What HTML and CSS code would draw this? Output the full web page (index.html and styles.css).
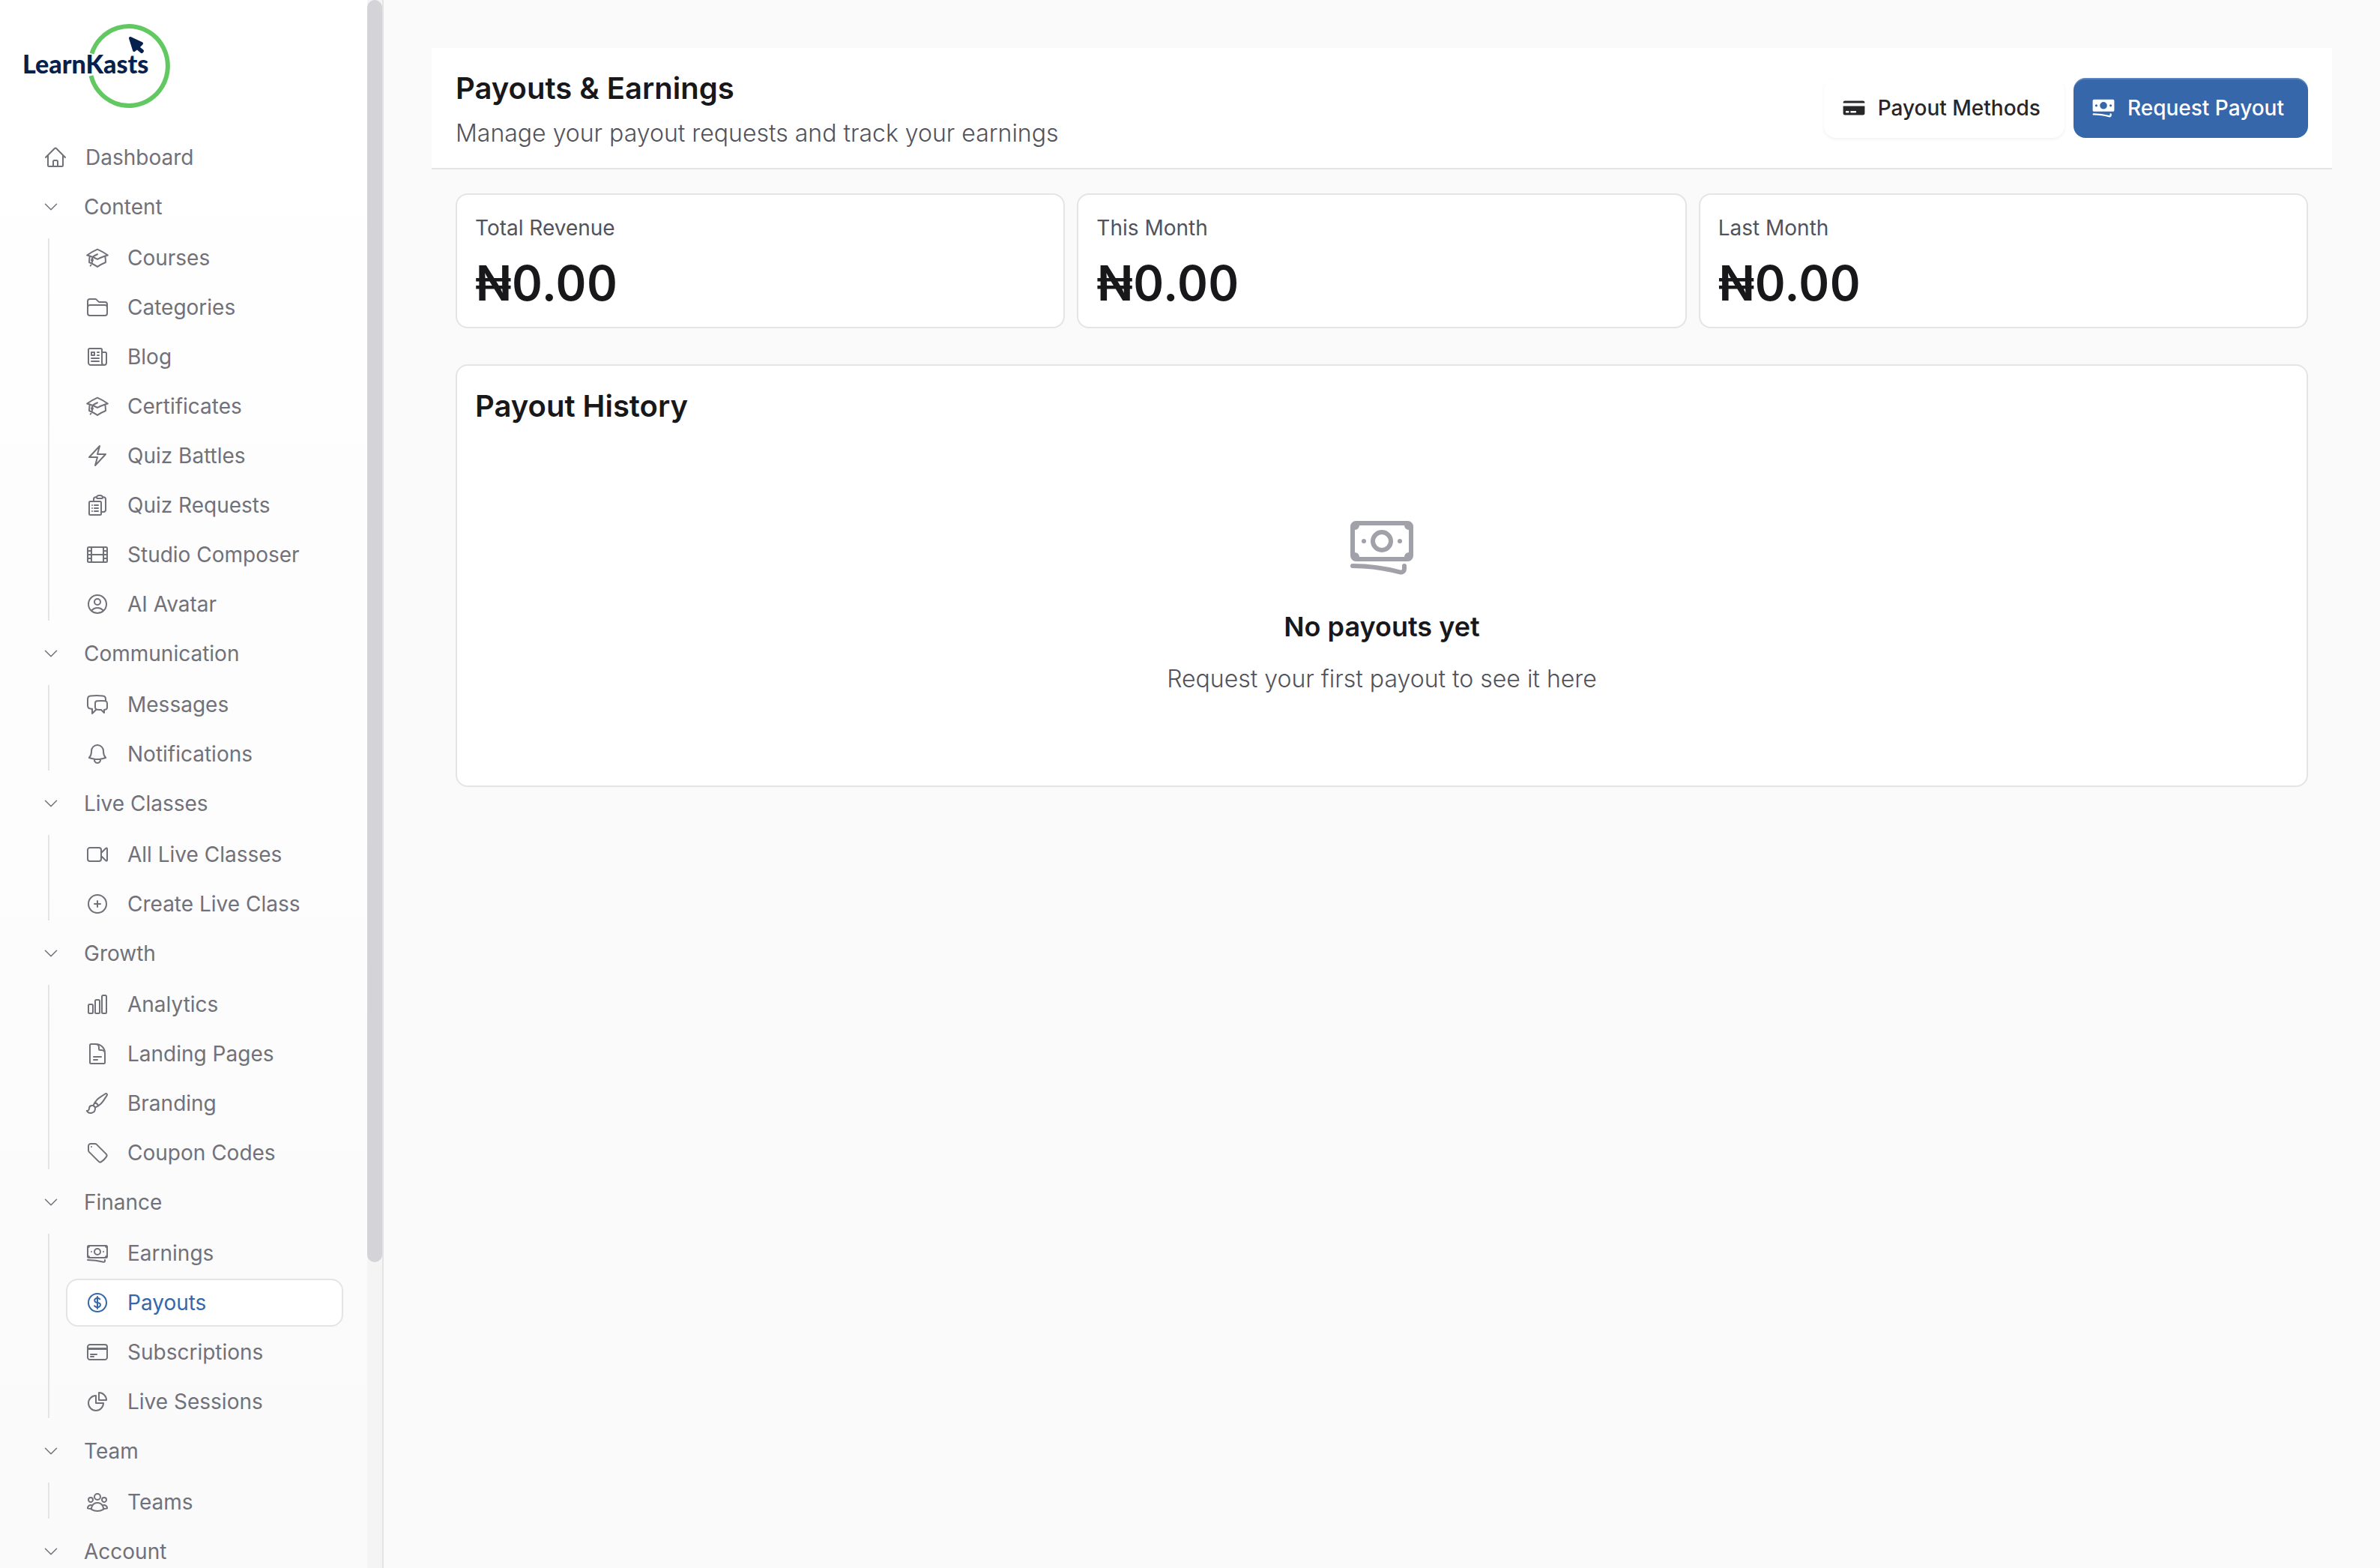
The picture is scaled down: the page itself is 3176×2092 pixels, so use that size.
FILE: index.html
```html
<!DOCTYPE html>
<html lang="en">
<head>
  <meta charset="UTF-8">
  <meta name="viewport" content="width=device-width, initial-scale=1.0">
  <title>Payouts & Earnings - LearnKasts</title>
  <link rel="stylesheet" href="styles.css">
</head>
<body>
  <!-- icon sprite -->
  <svg class="sprite" aria-hidden="true">
    <symbol id="home" viewBox="0 0 24 24"><path d="m2.25 12 8.954-8.955c.44-.439 1.152-.439 1.591 0L21.75 12M4.5 9.75v10.125c0 .621.504 1.125 1.125 1.125H9.75v-4.875c0-.621.504-1.125 1.125-1.125h2.25c.621 0 1.125.504 1.125 1.125V21h4.125c.621 0 1.125-.504 1.125-1.125V9.75M8.25 21h8.25"/></symbol>
    <symbol id="chevron" viewBox="0 0 24 24"><path d="m19.5 8.25-7.5 7.5-7.5-7.5"/></symbol>
    <symbol id="cap" viewBox="0 0 24 24"><path d="M4.26 10.147a60.438 60.438 0 0 0-.491 6.347A48.62 48.62 0 0 1 12 20.904a48.62 48.62 0 0 1 8.232-4.41 60.46 60.46 0 0 0-.491-6.347m-15.482 0a50.636 50.636 0 0 0-2.658-.813A59.906 59.906 0 0 1 12 3.493a59.903 59.903 0 0 1 10.399 5.84c-.896.248-1.783.52-2.658.814m-15.482 0A50.717 50.717 0 0 1 12 13.489a50.702 50.702 0 0 1 7.74-3.342M6.75 15a.75.75 0 1 0 0-1.5.75.75 0 0 0 0 1.5Zm0 0v-3.675A55.378 55.378 0 0 1 12 8.443m-7.007 11.55A5.981 5.981 0 0 0 6.75 15.75v-1.5"/></symbol>
    <symbol id="folder" viewBox="0 0 24 24"><path d="M2.25 12.75V12A2.25 2.25 0 0 1 4.5 9.75h15A2.25 2.25 0 0 1 21.75 12v.75m-8.69-6.44-2.12-2.12a1.5 1.5 0 0 0-1.061-.44H4.5A2.25 2.25 0 0 0 2.25 6v12a2.25 2.25 0 0 0 2.25 2.25h15A2.25 2.25 0 0 0 21.75 18V9a2.25 2.25 0 0 0-2.25-2.25h-5.379a1.5 1.5 0 0 1-1.06-.44Z"/></symbol>
    <symbol id="newspaper" viewBox="0 0 24 24"><path d="M12 7.5h1.5m-1.5 3h1.5m-7.5 3h7.5m-7.5 3h7.5m3-9h3.375c.621 0 1.125.504 1.125 1.125V18a2.25 2.25 0 0 1-2.25 2.25M16.5 7.5V18a2.25 2.25 0 0 0 2.25 2.25M16.5 7.5V4.875c0-.621-.504-1.125-1.125-1.125H4.125C3.504 3.75 3 4.254 3 4.875V18a2.25 2.25 0 0 0 2.25 2.25h13.5M6 7.5h3v3H6v-3Z"/></symbol>
    <symbol id="bolt" viewBox="0 0 24 24"><path d="m3.75 13.5 10.5-11.25L12 10.5h8.25L9.75 21.75 12 13.5H3.75Z"/></symbol>
    <symbol id="clipboard" viewBox="0 0 24 24"><path d="M9 12h3.75M9 15h3.75M9 18h3.75m3 .75H18a2.25 2.25 0 0 0 2.25-2.25V6.108c0-1.135-.845-2.098-1.976-2.192a48.424 48.424 0 0 0-1.123-.08m-5.801 0c-.065.21-.1.433-.1.664 0 .414.336.75.75.75h4.5a.75.75 0 0 0 .75-.75 2.25 2.25 0 0 0-.1-.664m-5.8 0A2.251 2.251 0 0 1 13.5 2.25H15c1.012 0 1.867.668 2.15 1.586m-5.8 0c-.376.023-.75.05-1.124.08C9.095 4.01 8.25 4.973 8.25 6.108V8.25m0 0H4.875c-.621 0-1.125.504-1.125 1.125v11.25c0 .621.504 1.125 1.125 1.125h9.75c.621 0 1.125-.504 1.125-1.125V9.375c0-.621-.504-1.125-1.125-1.125H8.25ZM6.75 12h.008v.008H6.75V12Zm0 3h.008v.008H6.75V15Zm0 3h.008v.008H6.75V18Z"/></symbol>
    <symbol id="film" viewBox="0 0 24 24"><path d="M3.375 19.5h17.25m-17.25 0a1.125 1.125 0 0 1-1.125-1.125M3.375 19.5h1.5C5.496 19.5 6 18.996 6 18.375m-3.75 0V5.625m0 12.75v-1.5c0-.621.504-1.125 1.125-1.125m18.375 2.625V5.625m0 12.75c0 .621-.504 1.125-1.125 1.125m1.125-1.125v-1.5c0-.621-.504-1.125-1.125-1.125m0 3.75h-1.5A1.125 1.125 0 0 1 18 18.375M20.625 4.5H3.375m17.25 0c.621 0 1.125.504 1.125 1.125M20.625 4.5h-1.5C18.504 4.5 18 5.004 18 5.625m3.75 0v1.5c0 .621-.504 1.125-1.125 1.125M3.375 4.5c-.621 0-1.125.504-1.125 1.125M3.375 4.5h1.5C5.496 4.5 6 5.004 6 5.625m-3.75 0v1.5c0 .621.504 1.125 1.125 1.125m0 0h1.5m-1.5 0c-.621 0-1.125.504-1.125 1.125v1.5c0 .621.504 1.125 1.125 1.125m1.5-3.75C5.496 8.25 6 7.746 6 7.125v-1.5M4.875 8.25C5.496 8.25 6 8.754 6 9.375v1.5m0-5.25v5.25m0-5.25C6 5.004 6.504 4.5 7.125 4.5h9.75c.621 0 1.125.504 1.125 1.125m1.125 2.625h1.5m-1.5 0A1.125 1.125 0 0 1 18 7.125v-1.5m1.125 2.625c-.621 0-1.125.504-1.125 1.125v1.5m2.625-2.625c.621 0 1.125.504 1.125 1.125v1.5c0 .621-.504 1.125-1.125 1.125M18 5.625v5.25M7.125 12h9.75m-9.75 0A1.125 1.125 0 0 1 6 10.875M7.125 12C6.504 12 6 12.504 6 13.125m0-2.25C6 11.496 5.496 12 4.875 12M18 10.875c0 .621-.504 1.125-1.125 1.125M18 10.875c0 .621.504 1.125 1.125 1.125m-2.25 0c.621 0 1.125.504 1.125 1.125m-12 5.25v-5.25m0 5.25c0 .621.504 1.125 1.125 1.125h9.75c.621 0 1.125-.504 1.125-1.125m-12 0v-1.5c0-.621-.504-1.125-1.125-1.125M18 18.375v-5.25m0 5.25v-1.5c0-.621.504-1.125 1.125-1.125M18 13.125v1.5c0 .621.504 1.125 1.125 1.125M18 13.125c0-.621.504-1.125 1.125-1.125M6 13.125v1.5c0 .621-.504 1.125-1.125 1.125M6 13.125C6 12.504 5.496 12 4.875 12m-1.5 0h1.5m-1.5 0c-.621 0-1.125.504-1.125 1.125v1.5c0 .621.504 1.125 1.125 1.125M19.125 12h1.5m0 0c.621 0 1.125.504 1.125 1.125v1.5c0 .621-.504 1.125-1.125 1.125m-17.25 0h1.5m14.25 0h1.5"/></symbol>
    <symbol id="user-circle" viewBox="0 0 24 24"><path d="M17.982 18.725A7.488 7.488 0 0 0 12 15.75a7.488 7.488 0 0 0-5.982 2.975m11.963 0a9 9 0 1 0-11.963 0m11.963 0A8.966 8.966 0 0 1 12 21a8.966 8.966 0 0 1-5.982-2.275M15 9.75a3 3 0 1 1-6 0 3 3 0 0 1 6 0Z"/></symbol>
    <symbol id="chat" viewBox="0 0 24 24"><path d="M20.25 8.511c.884.284 1.5 1.128 1.5 2.097v4.286c0 1.136-.847 2.1-1.98 2.193-.34.027-.68.052-1.02.072v3.091l-3-3c-1.354 0-2.694-.055-4.02-.163a2.115 2.115 0 0 1-.825-.242m9.345-8.334a2.126 2.126 0 0 0-.476-.095 48.64 48.64 0 0 0-8.048 0c-1.131.094-1.976 1.057-1.976 2.192v4.286c0 .837.46 1.58 1.155 1.951m9.345-8.334V6.637c0-1.621-1.152-3.026-2.76-3.235A48.455 48.455 0 0 0 11.25 3c-2.115 0-4.198.137-6.24.402-1.608.209-2.76 1.614-2.76 3.235v6.226c0 1.621 1.152 3.026 2.76 3.235.577.075 1.157.14 1.74.194V21l4.155-4.155"/></symbol>
    <symbol id="bell" viewBox="0 0 24 24"><path d="M14.857 17.082a23.848 23.848 0 0 0 5.454-1.31A8.967 8.967 0 0 1 18 9.75V9A6 6 0 0 0 6 9v.75a8.967 8.967 0 0 1-2.312 6.022c1.733.64 3.56 1.085 5.455 1.31m5.714 0a24.255 24.255 0 0 1-5.714 0m5.714 0a3 3 0 1 1-5.714 0"/></symbol>
    <symbol id="video" viewBox="0 0 24 24"><path d="m15.75 10.5 4.72-4.72a.75.75 0 0 1 1.28.53v11.38a.75.75 0 0 1-1.28.53l-4.72-4.72M4.5 18.75h9a2.25 2.25 0 0 0 2.25-2.25v-9a2.25 2.25 0 0 0-2.25-2.25h-9A2.25 2.25 0 0 0 2.25 7.5v9a2.25 2.25 0 0 0 2.25 2.25Z"/></symbol>
    <symbol id="plus-circle" viewBox="0 0 24 24"><path d="M12 9v6m3-3H9m12 0a9 9 0 1 1-18 0 9 9 0 0 1 18 0Z"/></symbol>
    <symbol id="chart-bar" viewBox="0 0 24 24"><path d="M3 13.125C3 12.504 3.504 12 4.125 12h2.25c.621 0 1.125.504 1.125 1.125v6.75C7.5 20.496 6.996 21 6.375 21h-2.25A1.125 1.125 0 0 1 3 19.875v-6.75ZM9.75 8.625c0-.621.504-1.125 1.125-1.125h2.25c.621 0 1.125.504 1.125 1.125v11.25c0 .621-.504 1.125-1.125 1.125h-2.25a1.125 1.125 0 0 1-1.125-1.125V8.625ZM16.5 4.125c0-.621.504-1.125 1.125-1.125h2.25C20.496 3 21 3.504 21 4.125v15.75c0 .621-.504 1.125-1.125 1.125h-2.25a1.125 1.125 0 0 1-1.125-1.125V4.125Z"/></symbol>
    <symbol id="document" viewBox="0 0 24 24"><path d="M19.5 14.25v-2.625a3.375 3.375 0 0 0-3.375-3.375h-1.5A1.125 1.125 0 0 1 13.5 7.125v-1.5a3.375 3.375 0 0 0-3.375-3.375H8.25m0 12.75h7.5m-7.5 3H12M10.5 2.25H5.625c-.621 0-1.125.504-1.125 1.125v17.25c0 .621.504 1.125 1.125 1.125h12.75c.621 0 1.125-.504 1.125-1.125V11.25a9 9 0 0 0-9-9Z"/></symbol>
    <symbol id="brush" viewBox="0 0 24 24"><path d="M9.53 16.122a3 3 0 0 0-5.78 1.128 2.25 2.25 0 0 1-2.4 2.245 4.5 4.5 0 0 0 8.4-2.245c0-.399-.078-.78-.22-1.128Zm0 0a15.998 15.998 0 0 0 3.388-1.62m-5.043-.025a15.994 15.994 0 0 1 1.622-3.395m3.42 3.42a15.995 15.995 0 0 0 4.764-4.648l3.876-5.814a1.151 1.151 0 0 0-1.597-1.597L14.146 6.32a15.996 15.996 0 0 0-4.649 4.763m3.42 3.42a6.776 6.776 0 0 0-3.42-3.42"/></symbol>
    <symbol id="tag" viewBox="0 0 24 24"><path d="M9.568 3H5.25A2.25 2.25 0 0 0 3 5.25v4.318c0 .597.237 1.17.659 1.591l9.581 9.581c.699.699 1.78.872 2.607.33a18.095 18.095 0 0 0 5.223-5.223c.542-.827.369-1.908-.33-2.607L11.16 3.66A2.25 2.25 0 0 0 9.568 3ZM6 6h.008v.008H6V6Z"/></symbol>
    <symbol id="banknotes" viewBox="0 0 24 24"><path d="M2.25 18.75a60.07 60.07 0 0 1 15.797 2.101c.727.198 1.453-.342 1.453-1.096V18.75M3.75 4.5v.75A.75.75 0 0 1 3 6h-.75m0 0v-.375c0-.621.504-1.125 1.125-1.125H20.25M2.25 6v9m18-10.5v.75c0 .414.336.75.75.75h.75m-1.5-1.5h.375c.621 0 1.125.504 1.125 1.125v9.75c0 .621-.504 1.125-1.125 1.125h-.375m1.5-1.5H21a.75.75 0 0 0-.75.75v.75m0 0H3.75m0 0h-.375a1.125 1.125 0 0 1-1.125-1.125V15m1.5 1.5v-.75A.75.75 0 0 0 3 15h-.75M15 10.5a3 3 0 1 1-6 0 3 3 0 0 1 6 0Zm3 0h.008v.008H18V10.5Zm-12 0h.008v.008H6V10.5Z"/></symbol>
    <symbol id="dollar" viewBox="0 0 24 24"><path d="M12 6v12m-3-2.818.879.659c1.171.879 3.07.879 4.242 0 1.172-.879 1.172-2.303 0-3.182C13.536 12.219 12.768 12 12 12c-.725 0-1.45-.22-2.003-.659-1.106-.879-1.106-2.303 0-3.182s2.9-.879 4.006 0l.415.33M21 12a9 9 0 1 1-18 0 9 9 0 0 1 18 0Z"/></symbol>
    <symbol id="card" viewBox="0 0 24 24"><path d="M2.25 8.25h19.5M2.25 9h19.5m-16.5 5.25h6m-6 2.25h3m-3.75 3h15a2.25 2.25 0 0 0 2.25-2.25V6.75A2.25 2.25 0 0 0 19.5 4.5h-15a2.25 2.25 0 0 0-2.25 2.25v10.5A2.25 2.25 0 0 0 4.5 19.5Z"/></symbol>
    <symbol id="chart-pie" viewBox="0 0 24 24"><path d="M10.5 6a7.5 7.5 0 1 0 7.5 7.5h-7.5V6ZM13.5 10.5H21A7.5 7.5 0 0 0 13.5 3v7.5Z"/></symbol>
    <symbol id="users" viewBox="0 0 24 24"><path d="M18 18.72a9.094 9.094 0 0 0 3.741-.479 3 3 0 0 0-4.682-2.72m.94 3.198.001.031c0 .225-.012.447-.037.666A11.944 11.944 0 0 1 12 21c-2.17 0-4.207-.576-5.963-1.584A6.062 6.062 0 0 1 6 18.719m12 0a5.971 5.971 0 0 0-.941-3.197m0 0A5.995 5.995 0 0 0 12 12.75a5.995 5.995 0 0 0-5.058 2.772m0 0a3 3 0 0 0-4.681 2.72 8.986 8.986 0 0 0 3.74.477m.94-3.197a5.971 5.971 0 0 0-.94 3.197M15 6.75a3 3 0 1 1-6 0 3 3 0 0 1 6 0Zm6 3a2.25 2.25 0 1 1-4.5 0 2.25 2.25 0 0 1 4.5 0Zm-13.5 0a2.25 2.25 0 1 1-4.5 0 2.25 2.25 0 0 1 4.5 0Z"/></symbol>
  </svg>

  <div class="layout">
    <aside class="sidebar">
      <div class="sidebar-content">
        <a class="logo" href="#" aria-label="LearnKasts">
          <svg width="196" height="114" viewBox="0 0 196 114">
            <path class="logo-ring" d="M90.5 39.5A52 53 0 1 1 89.5 69"/>
            <path class="logo-arrow" d="M142 19 157 26 152 31 158 36 157 37 151 32 147 35Z"/>
            <text class="logo-text" x="-2" y="66">LearnKasts</text>
          </svg>
        </a>

        <nav class="nav">
          <a class="nav-item" href="#"><svg class="icon"><use href="#home"/></svg>Dashboard</a>

          <button class="nav-heading" type="button"><svg class="chevron"><use href="#chevron"/></svg>Content</button>
          <div class="submenu">
            <div class="submenu-items">
              <a class="nav-item" href="#"><svg class="icon"><use href="#cap"/></svg>Courses</a>
              <a class="nav-item" href="#"><svg class="icon"><use href="#folder"/></svg>Categories</a>
              <a class="nav-item" href="#"><svg class="icon"><use href="#newspaper"/></svg>Blog</a>
              <a class="nav-item" href="#"><svg class="icon"><use href="#cap"/></svg>Certificates</a>
              <a class="nav-item" href="#"><svg class="icon"><use href="#bolt"/></svg>Quiz Battles</a>
              <a class="nav-item" href="#"><svg class="icon"><use href="#clipboard"/></svg>Quiz Requests</a>
              <a class="nav-item" href="#"><svg class="icon"><use href="#film"/></svg>Studio Composer</a>
              <a class="nav-item" href="#"><svg class="icon"><use href="#user-circle"/></svg>AI Avatar</a>
            </div>
          </div>

          <button class="nav-heading" type="button"><svg class="chevron"><use href="#chevron"/></svg>Communication</button>
          <div class="submenu">
            <div class="submenu-items">
              <a class="nav-item" href="#"><svg class="icon"><use href="#chat"/></svg>Messages</a>
              <a class="nav-item" href="#"><svg class="icon"><use href="#bell"/></svg>Notifications</a>
            </div>
          </div>

          <button class="nav-heading" type="button"><svg class="chevron"><use href="#chevron"/></svg>Live Classes</button>
          <div class="submenu">
            <div class="submenu-items">
              <a class="nav-item" href="#"><svg class="icon"><use href="#video"/></svg>All Live Classes</a>
              <a class="nav-item" href="#"><svg class="icon"><use href="#plus-circle"/></svg>Create Live Class</a>
            </div>
          </div>

          <button class="nav-heading" type="button"><svg class="chevron"><use href="#chevron"/></svg>Growth</button>
          <div class="submenu">
            <div class="submenu-items">
              <a class="nav-item" href="#"><svg class="icon"><use href="#chart-bar"/></svg>Analytics</a>
              <a class="nav-item" href="#"><svg class="icon"><use href="#document"/></svg>Landing Pages</a>
              <a class="nav-item" href="#"><svg class="icon"><use href="#brush"/></svg>Branding</a>
              <a class="nav-item" href="#"><svg class="icon"><use href="#tag"/></svg>Coupon Codes</a>
            </div>
          </div>

          <button class="nav-heading" type="button"><svg class="chevron"><use href="#chevron"/></svg>Finance</button>
          <div class="submenu">
            <div class="submenu-items">
              <a class="nav-item" href="#"><svg class="icon"><use href="#banknotes"/></svg>Earnings</a>
              <a class="nav-item active" href="#"><svg class="icon"><use href="#dollar"/></svg>Payouts</a>
              <a class="nav-item" href="#"><svg class="icon"><use href="#card"/></svg>Subscriptions</a>
              <a class="nav-item" href="#"><svg class="icon"><use href="#chart-pie"/></svg>Live Sessions</a>
            </div>
          </div>

          <button class="nav-heading" type="button"><svg class="chevron"><use href="#chevron"/></svg>Team</button>
          <div class="submenu">
            <div class="submenu-items">
              <a class="nav-item" href="#"><svg class="icon"><use href="#users"/></svg>Teams</a>
            </div>
          </div>

          <button class="nav-heading" type="button"><svg class="chevron"><use href="#chevron"/></svg>Account</button>
        </nav>
      </div>
      <div class="scroll-track"><div class="scroll-thumb"></div></div>
    </aside>

    <main class="main">
      <header class="page-header">
        <div>
          <h1>Payouts &amp; Earnings</h1>
          <p class="subtitle">Manage your payout requests and track your earnings</p>
        </div>
        <div class="actions">
          <button class="btn" type="button">
            <svg class="btn-icon" viewBox="0 0 20 20"><path fill-rule="evenodd" d="M2.5 4A1.5 1.5 0 0 0 1 5.5V6h18v-.5A1.5 1.5 0 0 0 17.5 4h-15ZM19 8.5H1v6A1.5 1.5 0 0 0 2.5 16h15a1.5 1.5 0 0 0 1.5-1.5v-6ZM3 13.25a.75.75 0 0 1 .75-.75h1.5a.75.75 0 0 1 0 1.5h-1.5a.75.75 0 0 1-.75-.75Zm4.75-.75a.75.75 0 0 0 0 1.5h3.5a.75.75 0 0 0 0-1.5h-3.5Z"/></svg>
            Payout Methods
          </button>
          <button class="btn btn-primary" type="button">
            <svg class="btn-icon" viewBox="0 0 20 20"><path fill-rule="evenodd" d="M1 4a1 1 0 0 1 1-1h16a1 1 0 0 1 1 1v8a1 1 0 0 1-1 1H2a1 1 0 0 1-1-1V4Zm12 4a3 3 0 1 1-6 0 3 3 0 0 1 6 0ZM4 9a1 1 0 1 0 0-2 1 1 0 0 0 0 2Zm13-1a1 1 0 1 1-2 0 1 1 0 0 1 2 0ZM1.75 14.5a.75.75 0 0 0 0 1.5c4.417 0 8.693.603 12.749 1.73 1.111.309 2.251-.512 2.251-1.696v-.784a.75.75 0 0 0-1.5 0v.784a.272.272 0 0 1-.35.25A49.043 49.043 0 0 0 1.75 14.5Z"/></svg>
            Request Payout
          </button>
        </div>
      </header>

      <div class="content">
        <section class="stats">
          <div class="card">
            <p class="stat-label">Total Revenue</p>
            <p class="stat-value">₦0.00</p>
          </div>
          <div class="card">
            <p class="stat-label">This Month</p>
            <p class="stat-value">₦0.00</p>
          </div>
          <div class="card">
            <p class="stat-label">Last Month</p>
            <p class="stat-value">₦0.00</p>
          </div>
        </section>

        <section class="card history">
          <h2>Payout History</h2>
          <div class="empty">
            <svg class="empty-icon"><use href="#banknotes"/></svg>
            <h3>No payouts yet</h3>
            <p class="subtitle">Request your first payout to see it here</p>
          </div>
        </section>
      </div>
    </main>
  </div>
</body>
</html>
```
FILE: styles.css
```css
:root {
  --primary: #3567aa;
  --border: #e4e4e4;
  --muted: #71717a;
  --text: #18181b;
  --text-soft: #52525b;
}

* {
  box-sizing: border-box;
}

body {
  margin: 0;
  font-family: Inter, sans-serif;
  font-size: 28px;
  color: var(--text);
  background: #fafafa;
}

h1, h2, h3, p {
  margin: 0;
}

button {
  font: inherit;
  cursor: pointer;
}

.sprite {
  display: none;
}

.layout {
  display: flex;
  height: 100vh;
}

/* Sidebar */
.sidebar {
  display: flex;
  flex-shrink: 0;
  width: 512px;
  border-right: 2px solid var(--border);
  background: linear-gradient(to bottom, #fff, #fafafa);
  overflow: hidden;
}

.sidebar-content {
  flex: 1;
  padding: 32px 32px 0;
}

.logo {
  display: block;
  margin-bottom: 32px;
}

.logo svg {
  display: block;
  overflow: visible;
}

.logo-ring {
  fill: none;
  stroke: #62c962;
  stroke-width: 6;
}

.logo-arrow {
  fill: #06214d;
  stroke: #06214d;
  stroke-width: 4;
  stroke-linejoin: round;
}

.logo-text {
  font-family: Lato, sans-serif;
  font-size: 34px;
  font-weight: 900;
  fill: #06214d;
}

.nav {
  display: flex;
  flex-direction: column;
  gap: 2px;
}

.nav-item {
  display: flex;
  align-items: center;
  gap: 24px;
  height: 64px;
  padding: 0 24px;
  border: 2px solid transparent;
  border-radius: 16px;
  color: var(--muted);
  text-decoration: none;
  white-space: nowrap;
}

.nav-item.active {
  background: #fff;
  border-color: var(--border);
  color: var(--primary);
}

.nav-heading {
  display: flex;
  align-items: center;
  gap: 32px;
  height: 64px;
  padding: 0 24px;
  border: none;
  background: none;
  color: var(--muted);
}

.icon,
.chevron,
.empty-icon {
  flex-shrink: 0;
  fill: none;
  stroke: currentColor;
  stroke-width: 1.5;
  stroke-linecap: round;
  stroke-linejoin: round;
}

.icon {
  width: 32px;
  height: 32px;
}

.chevron {
  width: 24px;
  height: 24px;
}

.submenu {
  display: flex;
  margin-top: 2px;
  padding-left: 32px;
}

.submenu::before {
  content: "";
  width: 2px;
  margin: 6px 22px 10px 0;
  background: var(--border);
}

.submenu-items {
  flex: 1;
  display: flex;
  flex-direction: column;
  gap: 2px;
}

.scroll-track {
  width: 20px;
  background: #f4f4f5;
}

.scroll-thumb {
  height: 80.5%;
  border-radius: 10px;
  background: #d4d4d8;
}

/* Main */
.main {
  flex: 1;
  padding: 64px;
}

.page-header {
  display: flex;
  justify-content: space-between;
  align-items: center;
  padding: 20px 32px;
  background: #fff;
  border-bottom: 2px solid var(--border);
}

h1,
h2 {
  font-size: 40px;
  line-height: 60px;
  font-weight: 600;
}

h1 {
  margin: 4px 0;
}

.subtitle {
  font-size: 32px;
  line-height: 52px;
  font-weight: 300;
  color: var(--text-soft);
}

.actions {
  display: flex;
  gap: 12px;
}

.btn {
  display: flex;
  align-items: center;
  gap: 16px;
  height: 80px;
  padding: 0 32px 0 24px;
  border: none;
  border-radius: 16px;
  background: #fff;
  color: #27272a;
  font-weight: 500;
  white-space: nowrap;
  box-shadow: 0 2px 4px rgba(0, 0, 0, 0.06);
}

.btn-primary {
  background: var(--primary);
  color: #fff;
  box-shadow: inset 0 2px 0 rgba(255, 255, 255, 0.2);
}

.btn-icon {
  width: 32px;
  height: 32px;
  fill: currentColor;
}

.content {
  padding: 32px;
}

.card {
  padding: 24px;
  background: #fff;
  border: 2px solid var(--border);
  border-radius: 16px;
}

.stats {
  display: grid;
  grid-template-columns: repeat(3, 1fr);
  gap: 16px;
  margin-bottom: 48px;
}

.stat-label {
  margin-bottom: 20px;
  line-height: 40px;
  color: var(--text-soft);
}

.stat-value {
  font-size: 64px;
  line-height: 68px;
  font-weight: 600;
  font-variant-numeric: tabular-nums;
}

.empty {
  display: flex;
  flex-direction: column;
  align-items: center;
  padding: 108px 0 92px;
}

.empty-icon {
  width: 96px;
  height: 96px;
  margin-bottom: 32px;
  color: #a1a1aa;
}

.empty h3 {
  margin-bottom: 16px;
  font-size: 36px;
  line-height: 56px;
  font-weight: 600;
}
```
